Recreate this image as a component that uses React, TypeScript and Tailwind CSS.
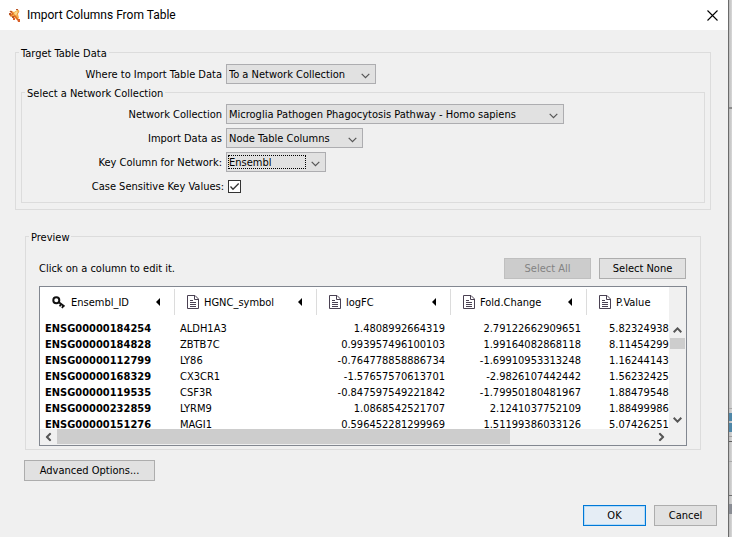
import type { ReactNode } from "react";

type Row = [string, string, string, string, string];

const rows: Row[] = [
  ["ENSG00000184254", "ALDH1A3", "1.4808992664319", "2.79122662909651", "5.82324938"],
  ["ENSG00000184828", "ZBTB7C", "0.993957496100103", "1.99164082868118", "8.11454299"],
  ["ENSG00000112799", "LY86", "-0.764778858886734", "-1.69910953313248", "1.16244143"],
  ["ENSG00000168329", "CX3CR1", "-1.57657570613701", "-2.9826107442442", "1.56232425"],
  ["ENSG00000119535", "CSF3R", "-0.847597549221842", "-1.79950180481967", "1.88479548"],
  ["ENSG00000232859", "LYRM9", "1.0868542521707", "2.1241037752109", "1.88499986"],
  ["ENSG00000151276", "MAGI1", "0.596452281299969", "1.51199386033126", "5.07426251"],
];

const columns = ["Ensembl_ID", "HGNC_symbol", "logFC", "Fold.Change", "P.Value"];

function AppIcon() {
  return (
    <svg width="12" height="13" viewBox="0 0 12 13" aria-hidden="true">
      <path d="M2 1.500 5 3 9 .5 10.500 2 9 5 10 9 8 11 5 8 2 8 .5 6 3 4.500z" fill="#f3ab48" />
      <path d="M1 2 4 5 1 7M5 8l4-5M6 7l3 4" fill="none" stroke="#e06a20" strokeWidth="1.3" />
      <path d="M5 4l3-2 1 1-2 4z" fill="#fbdc8c" />
      <path d="M1 2h2v1H1zM0 4h2v2H0zM3 7h2v2H3zM7 0h2v1H7z" fill="#b9562b" />
      <path d="M8 10h3v3H9zM4 9h2v2H4z" fill="#d9602a" />
    </svg>
  );
}

function KeyIcon() {
  return (
    <svg width="14" height="13" viewBox="0 0 14 13" className="shrink-0" aria-hidden="true">
      <circle cx="4.3" cy="4.2" r="3" fill="none" stroke="#111" strokeWidth="2" />
      <path d="M6.5 6 12.5 10.5M9 8 7.7 10.4M11.4 9.6 10 12" fill="none" stroke="#111" strokeWidth="1.8" />
    </svg>
  );
}

function DocIcon() {
  return (
    <svg width="12" height="14" viewBox="0 0 12 14" className="shrink-0" aria-hidden="true">
      <path d="M.5.5h7.5l3.5 3.5v9.5H.5z" fill="#fff" stroke="#4a4152" />
      <path d="M7.5.5V4.500h4" fill="none" stroke="#4a4152" />
      <path d="M3 5.500h3M3 7.500h6M3 9.500h6M3 11.500h6" stroke="#4a4152" />
    </svg>
  );
}

function Chevron({ turn = "", heavy = false }: { turn?: string; heavy?: boolean }) {
  return (
    <svg width="9" height="6" viewBox="0 0 9 6" className={"shrink-0 " + turn} aria-hidden="true">
      <path d="M.7.8 4.500 4.600 8.300.8" fill="none" stroke="#555" strokeWidth={heavy ? 2 : 1.2} />
    </svg>
  );
}

function Choice({ id, value, width, focused }: { id: string; value: string; width: string; focused?: boolean }) {
  return (
    <div className={"relative h-5 " + width}>
      <select
        id={id}
        className="block h-5 w-full appearance-none border border-[#adadb0] bg-[#e1e1e1] pt-[2px] pr-5 pl-[2px] leading-4 outline-none"
      >
        <option>{value}</option>
      </select>
      {focused && (
        <span className="pointer-events-none absolute inset-y-[3px] right-5 left-[2px] border border-dotted border-black" />
      )}
      <span className="pointer-events-none absolute top-[9px] right-[6px] flex">
        <Chevron />
      </span>
    </div>
  );
}

function Field({ id, label, labelWidth, children }: { id: string; label: string; labelWidth: string; children: ReactNode }) {
  return (
    <div className="flex h-5 items-center gap-1">
      <label htmlFor={id} className={"shrink-0 pt-[2px] text-right whitespace-nowrap " + labelWidth}>
        {label}
      </label>
      {children}
    </div>
  );
}

const legend = "h-[15px] px-[2px] leading-[17px]";
const button = "h-[21px] border text-center leading-4";

export default function App() {
  return (
    <div className="flex min-h-screen bg-[#f0f0f0] font-['DejaVu_Sans_Condensed','DejaVu_Sans',sans-serif] text-[11px] leading-4 text-black">
      <div className="flex min-w-0 flex-1 flex-col">
        <header className="flex h-[30px] items-center bg-white pr-[10px] pl-[9px]">
          <AppIcon />
          <h1 className="ml-[6px] flex-1 font-['Roboto',sans-serif] text-[12px]">Import Columns From Table</h1>
          <button aria-label="Close" className="flex">
            <svg width="11" height="11" viewBox="0 0 11 11" aria-hidden="true">
              <path d="M.5.5l10 10M10.500.5l-10 10" stroke="#000" strokeWidth="1.1" />
            </svg>
          </button>
        </header>

        <main className="pt-[15px] pb-[11px]">
          <fieldset className="mr-[17px] ml-[15px] border border-[#dcdcdc] pb-[6px]">
            <legend className={"ml-[3px] " + legend}>Target Table Data</legend>
            <div className="pt-1">
              <Field id="where" label="Where to Import Table Data" labelWidth="w-[206px]">
                <Choice id="where" value="To a Network Collection" width="w-[150px]" />
              </Field>
            </div>
            <fieldset className="mx-[5px] mt-px border border-[#dcdcdc] pb-[6px]">
              <legend className={"ml-[3px] " + legend}>Select a Network Collection</legend>
              <div className="flex flex-col gap-1 pt-1">
                <Field id="collection" label="Network Collection" labelWidth="w-[200px]">
                  <Choice
                    id="collection"
                    value="Microglia Pathogen Phagocytosis Pathway - Homo sapiens"
                    width="w-[338px]"
                  />
                </Field>
                <Field id="kind" label="Import Data as" labelWidth="w-[200px]">
                  <Choice id="kind" value="Node Table Columns" width="w-[137px]" />
                </Field>
                <Field id="key" label="Key Column for Network:" labelWidth="w-[200px]">
                  <Choice id="key" value="Ensembl" width="w-[100px]" focused />
                </Field>
                <Field id="case" label="Case Sensitive Key Values:" labelWidth="w-[202px]">
                  <span className="relative flex">
                    <input
                      id="case"
                      type="checkbox"
                      defaultChecked
                      className="peer size-[13px] appearance-none border border-[#333] bg-white"
                    />
                    <svg
                      width="13"
                      height="13"
                      viewBox="0 0 13 13"
                      className="pointer-events-none invisible absolute inset-0 peer-checked:visible"
                      aria-hidden="true"
                    >
                      <path d="M2.500 6.500 5 9.200 10.700 3.500" fill="none" stroke="#333" strokeWidth="1.3" />
                    </svg>
                  </span>
                </Field>
              </div>
            </fieldset>
          </fieldset>

          <fieldset className="mt-[19px] mr-[27px] ml-[25px] min-w-0 border border-[#dcdcdc] px-[13px] pb-[3px]">
            <legend className={"-ml-[10px] " + legend}>Preview</legend>
            <div className="flex items-center gap-2 pt-[14px] pr-px">
              <p className="flex-1">Click on a column to edit it.</p>
              <button disabled className={button + " w-[87px] border-[#bfbfbf] bg-[#cccccc] text-[#838383]"}>
                Select All
              </button>
              <button className={button + " w-[87px] border-[#adadad] bg-[#e1e1e1]"}>Select None</button>
            </div>

            <div className="mt-[7px] border border-[#828790]">
              <div className="flex h-[142px]">
                <div className="min-w-0 flex-1 overflow-hidden bg-white">
                  <table className="w-full table-fixed border-collapse">
                    <colgroup>
                      <col className="w-[135px]" />
                      <col className="w-[142px]" />
                      <col className="w-[134px]" />
                      <col className="w-[136px]" />
                      <col />
                    </colgroup>
                    <thead>
                      <tr className="h-[34px]">
                        {columns.map((name, i) => (
                          <th key={name} className="group p-0 pt-[2px] pb-[6px] align-top font-normal">
                            <div className="flex h-[26px] items-center gap-[5px] border-r border-[#dcdcdc] pr-[14px] pl-3 group-last:border-r-0 group-last:pr-0">
                              {i === 0 ? <KeyIcon /> : <DocIcon />}
                              <span className="flex-1 pt-[2px] text-left">{name}</span>
                              {i < columns.length - 1 && (
                                <svg width="4" height="8" viewBox="0 0 4 8" aria-hidden="true">
                                  <path d="M4 0v8L0 4z" fill="#000" />
                                </svg>
                              )}
                            </div>
                          </th>
                        ))}
                      </tr>
                    </thead>
                    <tbody>
                      {rows.map(([id, symbol, logFC, fold, p]) => (
                        <tr key={id} className="h-4 whitespace-nowrap">
                          <td className="p-0 pl-[5px] font-bold">{id}</td>
                          <td className="p-0 pl-[5px]">{symbol}</td>
                          <td className="p-0 pr-[6px] text-right">{logFC}</td>
                          <td className="p-0 pr-[6px] text-right">{fold}</td>
                          <td className="p-0 pl-[22px]">{p}</td>
                        </tr>
                      ))}
                    </tbody>
                  </table>
                </div>
                <div className="flex w-[17px] flex-col items-center pt-10 pb-[6px]">
                  <Chevron turn="rotate-180" heavy />
                  <div className="mt-[5px] h-[11px] w-[15px] bg-[#cdcdcd]" />
                  <div className="flex-1" />
                  <Chevron heavy />
                </div>
              </div>
              <div className="flex h-4 items-center pr-5 pl-1">
                <Chevron turn="rotate-90" heavy />
                <div className="ml-1 flex flex-1 self-stretch pb-px">
                  <div className="w-[453px] bg-[#cdcdcd]" />
                </div>
                <Chevron turn="-rotate-90" heavy />
              </div>
            </div>
          </fieldset>

          <div className="mt-[10px] ml-6">
            <button className={button + " w-[131px] border-[#adadad] bg-[#e1e1e1]"}>Advanced Options...</button>
          </div>

          <div className="mt-6 mr-[11px] flex justify-end gap-2">
            <button className={button + " w-[63px] border-[#0078d7] bg-[#e5edf5] inset-ring inset-ring-[#b5dcf8]"}>OK</button>
            <button className={button + " w-[63px] border-[#adadad] bg-[#e1e1e1]"}>Cancel</button>
          </div>
        </main>
      </div>

      <div className="flex w-1 flex-col border-l border-[#6b6b6b] bg-linear-to-r from-[#bcbcbc] to-[#d8d8d8]">
        <div className="mt-[107px] h-[2px] bg-[#8c8c8c]" />
        <div className="mt-[299px] h-px bg-[#a8a8a8]" />
        <div className="mt-1 h-2 bg-[#4f87a8]" />
        <div className="mt-[2px] h-[9px] bg-[#4f87a8]" />
        <div className="mt-1 h-px bg-[#a0a0a0]" />
        <div className="mt-1 h-px bg-[#5e5e5e]" />
        <div className="mt-[19px] h-px bg-[#a8a8a8]" />
        <div className="mt-[33px] h-px bg-[#6e6e6e]" />
        <div className="mt-2 h-[10px] bg-[#8a8d94]" />
      </div>
    </div>
  );
}
